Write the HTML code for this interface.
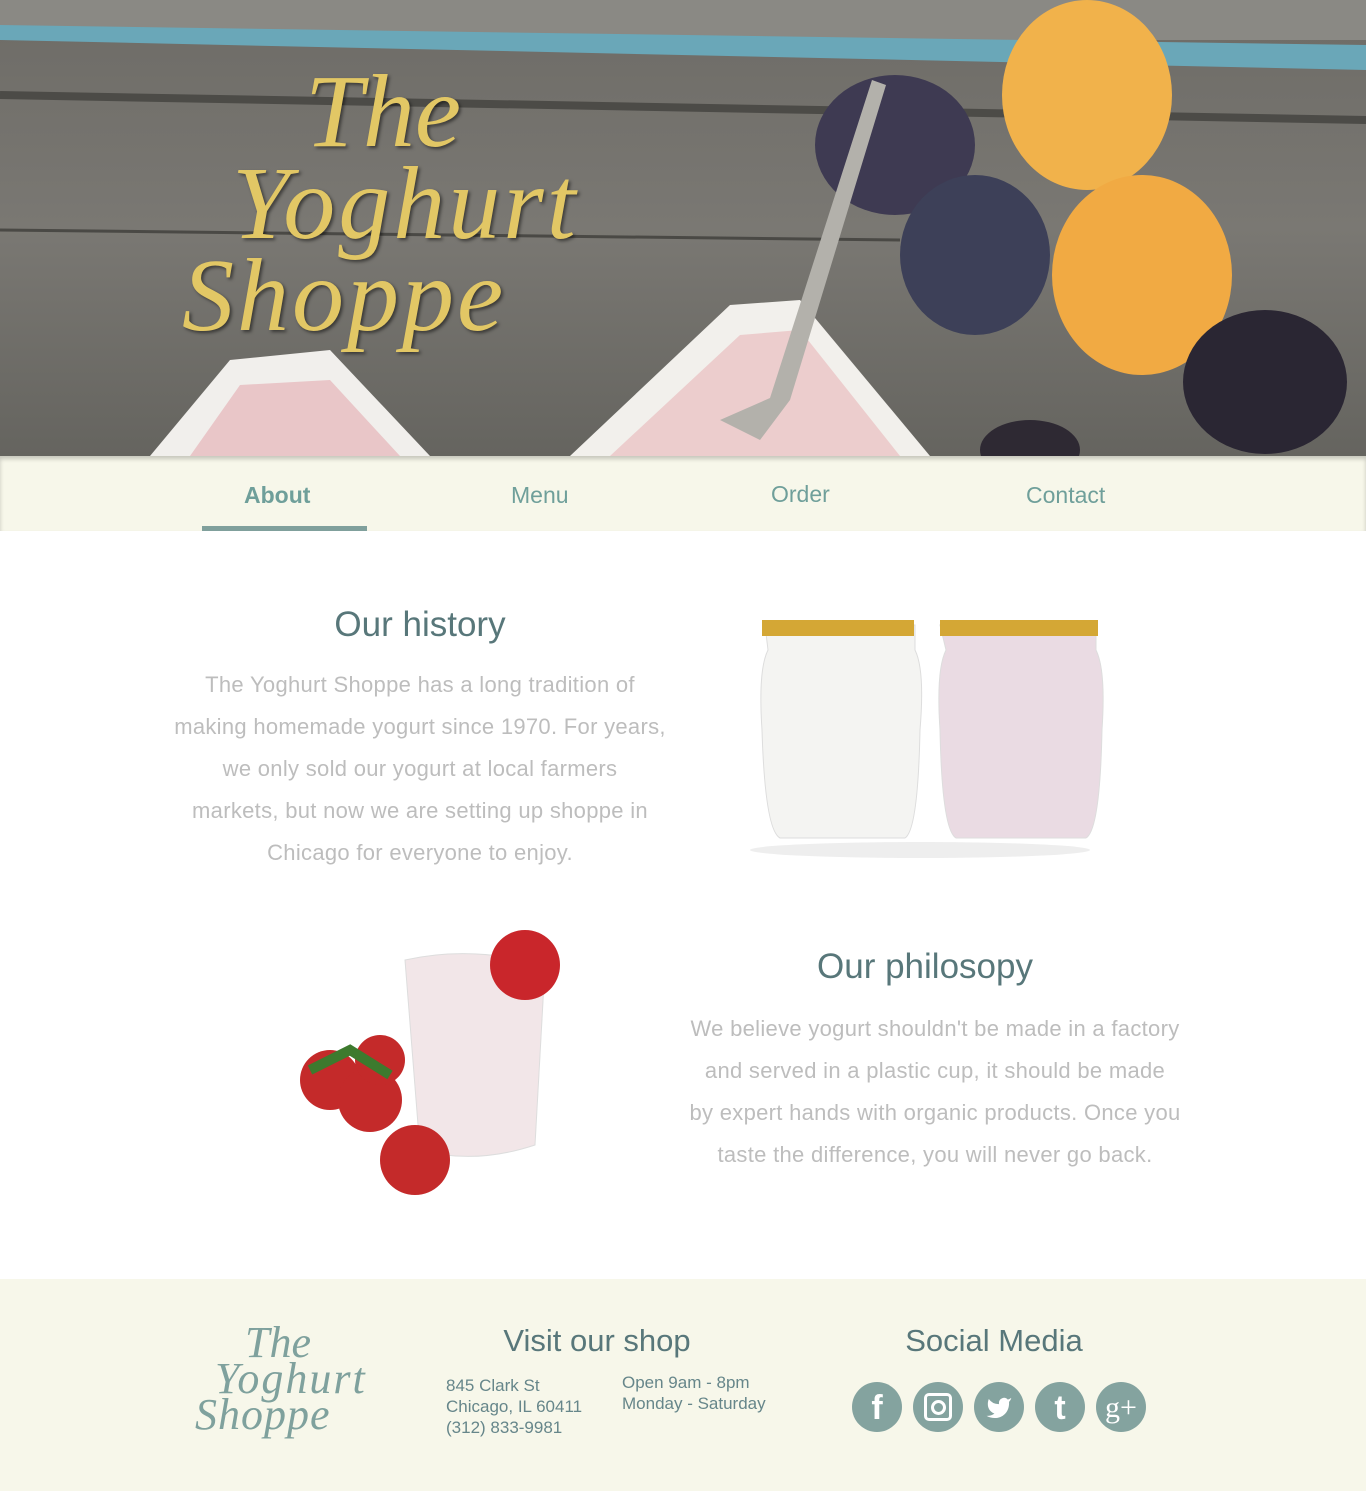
<!DOCTYPE html>
<html><head><meta charset="utf-8"><style>
body{margin:0;width:1366px;height:1491px;background:#fff;font-family:"Liberation Sans",sans-serif;overflow:hidden;position:relative}
.hero{position:absolute;left:0;top:0;width:1366px;height:456px;overflow:hidden}
.title{position:absolute;font-family:"Liberation Serif",serif;font-style:italic;color:#e2c765;text-shadow:2px 2px 3px rgba(0,0,0,.5);font-size:104px;line-height:92px}
nav{position:absolute;top:456px;left:0;width:1366px;height:75px;background:#f7f7ea;box-shadow:inset 0 3px 4px rgba(0,0,0,.2)}
nav span{position:absolute;top:26px;font-size:23px;color:#6f9f9a}
.bar{position:absolute;left:202px;top:526px;width:165px;height:5px;background:#80a09c}
h2{position:absolute;margin:0;font-weight:normal;font-size:35px;color:#58777a;text-align:center}
p.t{position:absolute;margin:0;font-size:22px;line-height:42px;color:#bdbdbd;text-align:center;letter-spacing:.3px;white-space:nowrap}
footer{position:absolute;left:0;top:1279px;width:1366px;height:212px;background:#f7f7ea}
.f{position:absolute;color:#66868a;font-size:17px;line-height:21px}
.ic{position:absolute;top:1382px;width:50px;height:50px;border-radius:50%;background:#84a39f;color:#fff;text-align:center;font-weight:bold;font-size:34px;line-height:52px}
</style></head><body>
<div class="hero">
<svg width="1366" height="456">
<defs><linearGradient id="w" x1="0" y1="0" x2="0" y2="1"><stop offset="0" stop-color="#6d6b66"/><stop offset=".5" stop-color="#7a7873"/><stop offset="1" stop-color="#65645f"/></linearGradient></defs>
<rect width="1366" height="456" fill="url(#w)"/>
<rect width="1366" height="40" fill="#8a8984"/>
<path d="M0 25 L1366 45 L1366 70 L0 40Z" fill="#6aa7b8"/>
<path d="M0 95 L1366 120" stroke="#4c4b47" stroke-width="8"/>
<path d="M0 230 L900 240" stroke="#4a4945" stroke-width="3"/>
<path d="M150 456 L230 360 L330 350 L430 456Z" fill="#f1efec"/>
<path d="M190 456 L240 385 L330 380 L400 456Z" fill="#e9c6c8"/>
<path d="M570 456 L730 305 L800 300 L930 456Z" fill="#f2f0ec"/>
<path d="M610 456 L740 335 L800 330 L900 456Z" fill="#eccdcd"/>
<ellipse cx="895" cy="145" rx="80" ry="70" fill="#3e3a52"/>
<ellipse cx="975" cy="255" rx="75" ry="80" fill="#3d4058"/>
<path d="M886 85 L790 400 L760 440 L720 420 L770 398 L872 80Z" fill="#b3b1ab"/>
<ellipse cx="1087" cy="95" rx="85" ry="95" fill="#f1b24b"/>
<ellipse cx="1142" cy="275" rx="90" ry="100" fill="#f1aa43"/>
<ellipse cx="1265" cy="382" rx="82" ry="72" fill="#2a2633"/>
<ellipse cx="1030" cy="450" rx="50" ry="30" fill="#2e2933"/>
</svg>
<div class="title" style="left:305px;top:66px">The</div>
<div class="title" style="left:232px;top:158px;letter-spacing:3px">Yoghurt</div>
<div class="title" style="left:182px;top:250px;letter-spacing:3px">Shoppe</div>
</div>
<nav><span style="left:244px;font-weight:bold">About</span><span style="left:511px">Menu</span><span style="left:771px;top:25px">Order</span><span style="left:1026px">Contact</span></nav>
<div class="bar"></div>
<h2 style="left:170px;width:500px;top:605px">Our history</h2>
<p class="t" style="left:120px;width:600px;top:664px">The Yoghurt Shoppe has a long tradition of<br>making homemade yogurt since 1970. For years,<br>we only sold our yogurt at local farmers<br>markets, but now we are setting up shoppe in<br>Chicago for everyone to enjoy.</p>
<svg style="position:absolute;left:740px;top:610px" width="380" height="260">
<ellipse cx="180" cy="240" rx="170" ry="8" fill="#eee"/>
<path d="M25 15 H175 V40 Q185 60 180 120 Q178 220 165 228 H40 Q25 220 22 120 Q18 60 28 40Z" fill="#f4f4f2" stroke="#ddd"/>
<rect x="22" y="10" width="152" height="16" fill="#d4a735"/>
<path d="M200 15 H356 V40 Q366 60 362 120 Q360 220 346 228 H216 Q202 220 200 120 Q196 60 206 40Z" fill="#eadbe3" stroke="#ddd"/>
<rect x="200" y="10" width="158" height="16" fill="#d4a735"/>
</svg>
<svg style="position:absolute;left:280px;top:900px" width="300" height="330">
<path d="M125 60 Q190 45 265 65 L255 245 Q195 265 140 250Z" fill="#f2e6e8" stroke="#ddd"/>
<circle cx="245" cy="65" r="35" fill="#c9262b"/>
<circle cx="50" cy="180" r="30" fill="#c42a2a"/><circle cx="90" cy="200" r="32" fill="#c42a2a"/><circle cx="135" cy="260" r="35" fill="#c42a2a"/><circle cx="100" cy="160" r="25" fill="#c42a2a"/>
<path d="M30 170 L70 150 L110 175" stroke="#3d7a2e" stroke-width="10" fill="none"/>
</svg>
<h2 style="left:675px;width:500px;top:947px">Our philosopy</h2>
<p class="t" style="left:635px;width:600px;top:1008px">We believe yogurt shouldn't be made in a factory<br>and served in a plastic cup, it should be made<br>by expert hands with organic products. Once you<br>taste the difference, you will never go back.</p>
<footer></footer>
<div style="position:absolute;left:195px;top:1325px;font-family:'Liberation Serif',serif;font-style:italic;color:#7fa19d;font-size:44px;line-height:36px"><div style="padding-left:50px">The</div><div style="padding-left:20px;letter-spacing:2px">Yoghurt</div><div style="letter-spacing:1px">Shoppe</div></div>
<h2 style="left:447px;width:300px;top:1323px;font-size:31px">Visit our shop</h2>
<div class="f" style="left:446px;top:1375px">845 Clark St<br>Chicago, IL 60411<br>(312) 833-9981</div>
<div class="f" style="left:622px;top:1372px">Open 9am - 8pm<br>Monday - Saturday</div>
<h2 style="left:844px;width:300px;top:1323px;font-size:31px">Social Media</h2>
<div class="ic" style="left:852px;font-family:'Liberation Sans'">f</div>
<div class="ic" style="left:913px"><div style="margin:11px;width:22px;height:22px;border:3px solid #fff;border-radius:5px;position:relative"><div style="position:absolute;left:4px;top:4px;width:9px;height:9px;border:3px solid #fff;border-radius:50%"></div></div></div>
<div class="ic" style="left:974px"><svg width="50" height="50" viewBox="0 0 24 24"><path transform="translate(5.5 6) scale(.54)" fill="#fff" d="M23 3a10.9 10.9 0 0 1-3.14 1.53 4.48 4.48 0 0 0-7.86 3v1A10.66 10.66 0 0 1 3 4s-4 9 5 13a11.64 11.64 0 0 1-7 2c9 5 20 0 20-11.5a4.5 4.5 0 0 0-.08-.83A7.72 7.72 0 0 0 23 3z"/></svg></div>
<div class="ic" style="left:1035px">t</div>
<div class="ic" style="left:1096px;font-weight:normal;font-family:'Liberation Serif';font-size:30px">g+</div>
</body></html>
